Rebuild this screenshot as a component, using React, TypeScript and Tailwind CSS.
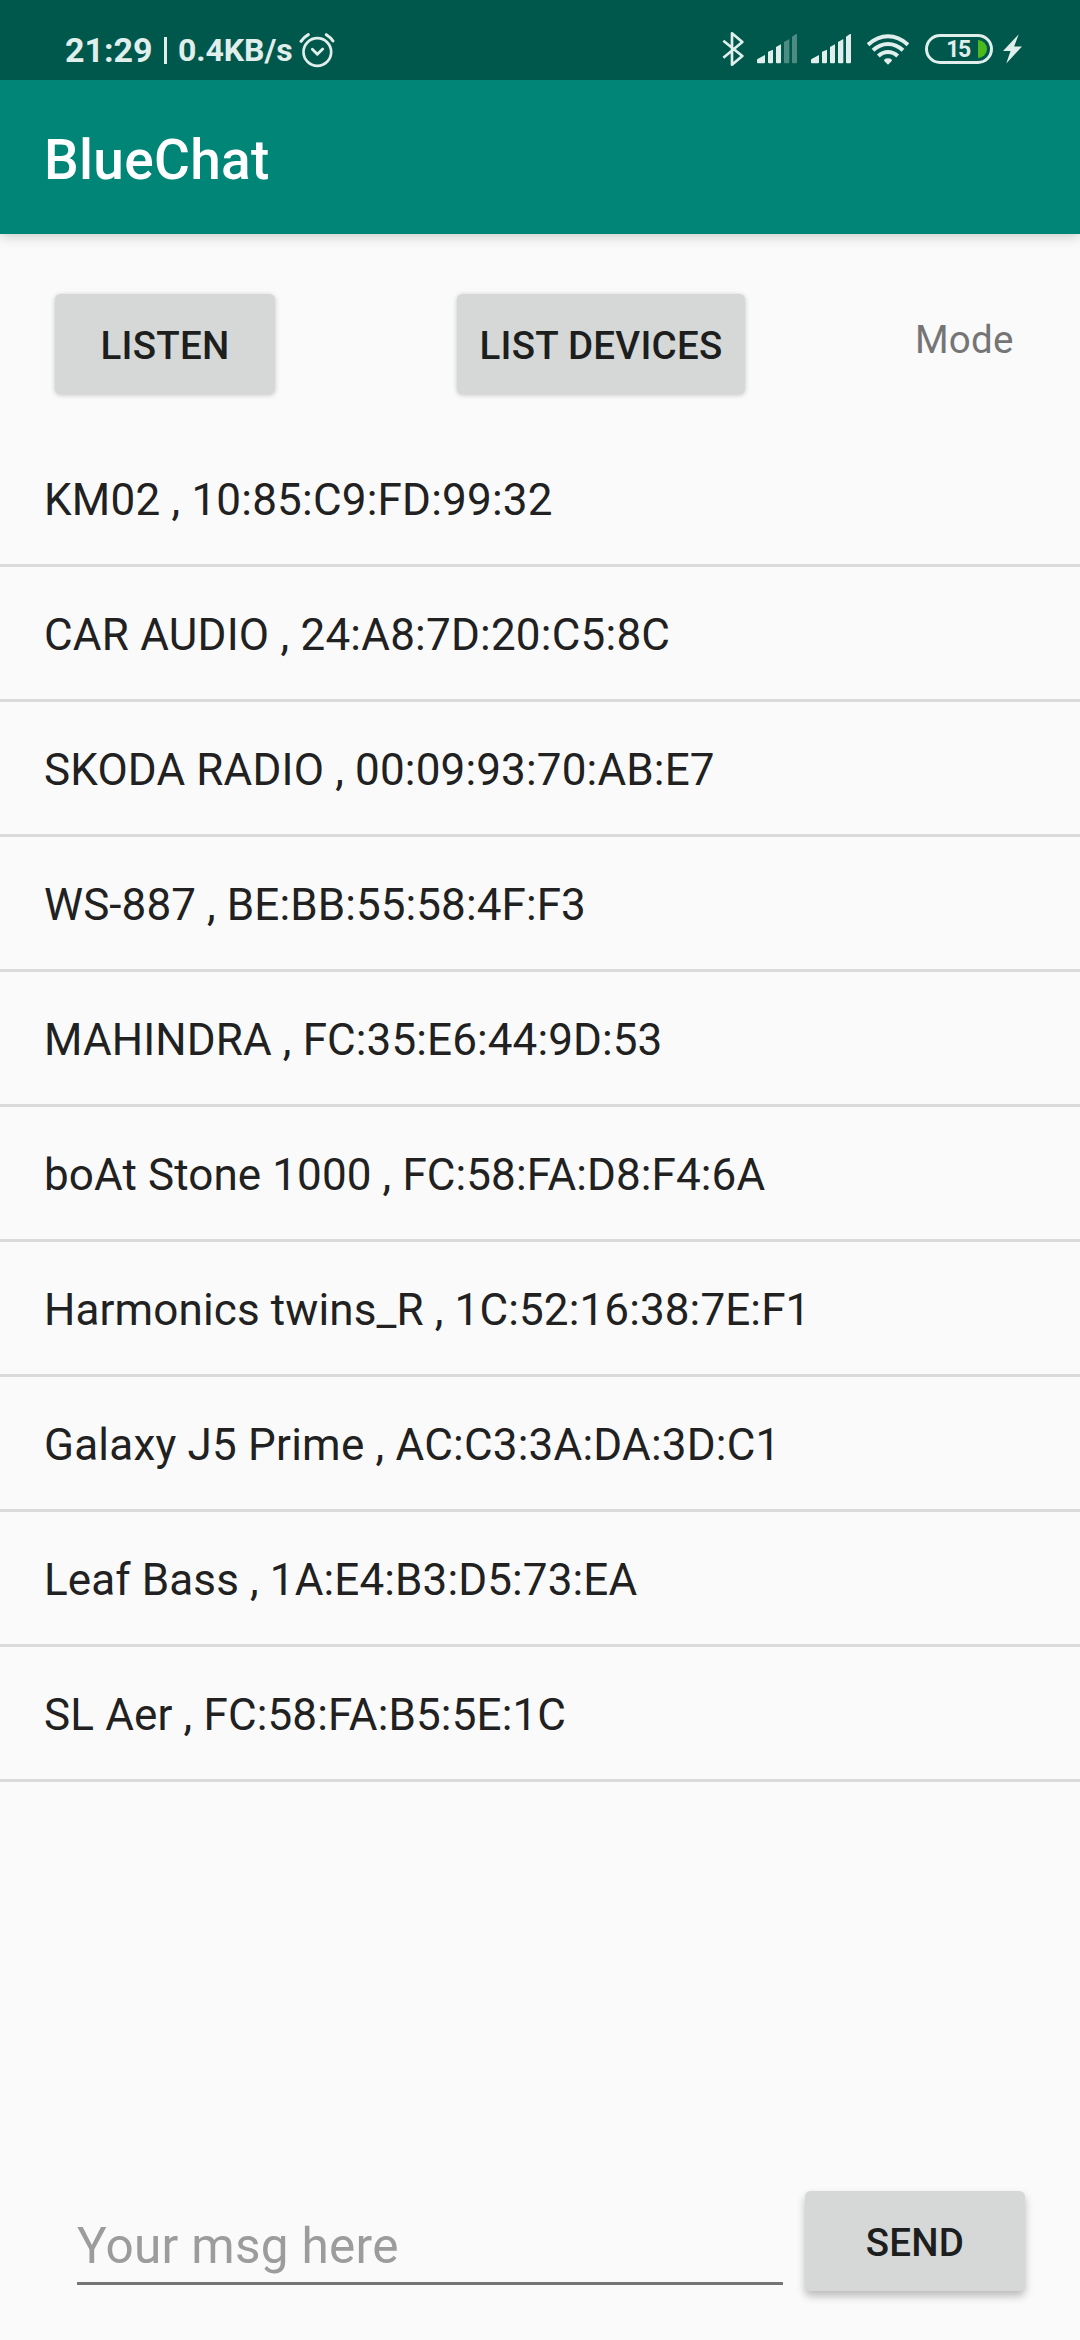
import React from 'react';

const devices = [
  { label: 'KM02 , 10:85:C9:FD:99:32', tracking: 'tracking-[0.210px]' },
  { label: 'CAR AUDIO , 24:A8:7D:20:C5:8C', tracking: 'tracking-[0.220px]' },
  { label: 'SKODA RADIO , 00:09:93:70:AB:E7', tracking: 'tracking-[0.160px]' },
  { label: 'WS-887 , BE:BB:55:58:4F:F3', tracking: 'tracking-[0.090px]' },
  { label: 'MAHINDRA , FC:35:E6:44:9D:53', tracking: 'tracking-[0.110px]' },
  { label: 'boAt Stone 1000 , FC:58:FA:D8:F4:6A', tracking: 'tracking-[0.100px]' },
  { label: 'Harmonics twins_R , 1C:52:16:38:7E:F1', tracking: 'tracking-[0.120px]' },
  { label: 'Galaxy J5 Prime , AC:C3:3A:DA:3D:C1', tracking: 'tracking-[0.210px]' },
  { label: 'Leaf Bass , 1A:E4:B3:D5:73:EA', tracking: 'tracking-[0.120px]' },
  { label: 'SL Aer , FC:58:FA:B5:5E:1C', tracking: 'tracking-[0.140px]' },
];

function AlarmIcon() {
  return (
    <svg className="ml-[6px] h-9 w-9 shrink-0" viewBox="776 66 108 108" fill="none" stroke="currentColor" strokeLinecap="round" strokeLinejoin="round">
      <circle cx="831" cy="126" r="41.5" strokeWidth="8" />
      <path d="M816 118l15 15 16-16" strokeWidth="8.500" />
      <path d="M782 94q8-12 22-20M858 74q13 8 20 19" strokeWidth="9" />
    </svg>
  );
}

function BluetoothIcon() {
  return (
    <svg className="h-9 w-[22px] shrink-0" viewBox="65 63 66 108" fill="none" stroke="currentColor" strokeWidth="8" strokeLinejoin="round">
      <path d="M69 92l57 46-31 26V70l31 26-57 47" />
    </svg>
  );
}

function SignalIcon({ level }: { level: number }) {
  const bars = [
    'M0 85v-7q0-3 3-4L24 63v22q0 3-3 3H3q-3 0-3-3z',
    'M33 53l15-6v37q0 4-3 4h-9q-3 0-3-3z',
    'M57 39l15-8v53q0 4-3 4h-9q-3 0-3-3z',
    'M81 24l16-9v69q0 4-3 4H84q-3 0-3-3z',
    'M105 8l12-8q3-1 3 2v82q0 4-3 4h-9q-3 0-3-3z',
  ];
  return (
    <svg className="h-[29.330px] w-10 shrink-0" viewBox="0 0 120 88" fill="currentColor">
      {bars.map((d, i) => (
        <path key={d} d={d} opacity={i < level ? 1 : 0.35} />
      ))}
    </svg>
  );
}

function WifiIcon() {
  return (
    <svg className="h-[31px] w-[42px] shrink-0" viewBox="501 70 126 93" fill="none" stroke="currentColor" strokeWidth="12">
      <path d="M504 102Q532 76.500 564 76.500T624 102" />
      <path d="M519 119Q540 100 564 100T609 119" />
      <path d="M535 136Q548 124 564 124T593 136" />
      <path d="M564 162l-12-12q1-7 12-7t12 7z" fill="currentColor" stroke="none" />
    </svg>
  );
}

function Battery() {
  return (
    <div className="relative flex h-[30px] w-[68px] shrink-0 items-center justify-center rounded-full border-[3px] border-current">
      <span className="pr-[2px] text-[23px] font-bold leading-none tracking-[-1.500px]">15</span>
      <svg className="absolute right-[3px] top-[3px] h-[18px] w-[9px]" viewBox="0 0 9 18">
        <path d="M0 0a9 9 0 0 1 0 18z" fill="#4cba1b" />
      </svg>
    </div>
  );
}

function BoltIcon() {
  return (
    <svg className="h-[30px] w-[19px] shrink-0" viewBox="908 72 58 90" fill="currentColor">
      <path d="M956 72l-48 51h23l-13 38 48-52h-24z" />
    </svg>
  );
}

function StatusBar() {
  return (
    <header className="relative z-10 flex h-20 shrink-0 items-start justify-between bg-[#00574b] text-[#e0eeec]">
      <div className="flex h-full items-center pl-[65px] pt-[19px] font-bold leading-none">
        <span className="text-[34px]">21:29</span>
        <span className="ml-[11px] mt-px h-[27px] w-[3.500px] bg-current" />
        <span className="ml-[11px] text-[32px] tracking-[-0.100px]">0.4KB/s</span>
        <AlarmIcon />
      </div>
      <div className="flex h-full items-center pr-[58px] pt-[18px]">
        <BluetoothIcon />
        <span className="w-[13px]" />
        <SignalIcon level={3} />
        <span className="w-[14px]" />
        <SignalIcon level={5} />
        <span className="w-4" />
        <WifiIcon />
        <span className="w-4" />
        <Battery />
        <span className="w-[10px]" />
        <BoltIcon />
      </div>
    </header>
  );
}

function RaisedButton({ children, className }: { children: React.ReactNode; className: string }) {
  return (
    <button
      className={`shrink-0 rounded-[5.500px] bg-[#d6d8d7] pt-[3px] text-center text-[38.500px] font-medium leading-[97px] tracking-[0.250px] text-[#1d1e1e] ${className}`}
    >
      {children}
    </button>
  );
}

export default function App() {
  return (
    <div className="flex h-[2340px] w-[1080px] flex-col overflow-hidden bg-[#fafafa] font-['Roboto',sans-serif]">
      <StatusBar />
      <div className="flex h-[154px] shrink-0 items-center bg-[#008577] pl-11 shadow-[0_2px_12px_rgba(0,0,0,0.2)]">
        <h1 className="pt-[6px] text-[55px] font-medium leading-none tracking-[0.300px] text-white">BlueChat</h1>
      </div>

      <div className="flex h-[198px] shrink-0 items-start pl-[55px] pt-[60px]">
        <RaisedButton className="h-[100px] w-[220px] shadow-[0_1px_5px_rgba(0,0,0,0.22)]">LISTEN</RaisedButton>
        <RaisedButton className="ml-[182px] h-[100px] w-[288px] shadow-[0_1px_5px_rgba(0,0,0,0.22)]">LIST DEVICES</RaisedButton>
        <span className="ml-[170px] pt-[23px] text-[38.500px] leading-[45px] tracking-[0.250px] text-[#757575]">Mode</span>
      </div>

      <ul>
        {devices.map(({ label, tracking }) => (
          <li
            key={label}
            className={`flex h-[135px] items-center border-b-[3px] border-[#dadada] pl-11 pt-[3px] text-[44px] text-[#212121] ${tracking}`}
          >
            {label}
          </li>
        ))}
      </ul>

      <div className="mt-auto flex h-[149px] shrink-0 items-start pl-[77px]">
        <input
          className="h-[94px] w-[706px] shrink-0 border-b-[3px] border-[#757575] bg-transparent pt-[19px] text-[49.500px] tracking-[0.300px] outline-none placeholder:text-[#9c9c9c] placeholder:opacity-100"
          placeholder="Your msg here"
        />
        <RaisedButton className="ml-[22px] h-[100px] w-[220px] shadow-[0_5px_9px_rgba(0,0,0,0.26)]">SEND</RaisedButton>
      </div>
    </div>
  );
}
